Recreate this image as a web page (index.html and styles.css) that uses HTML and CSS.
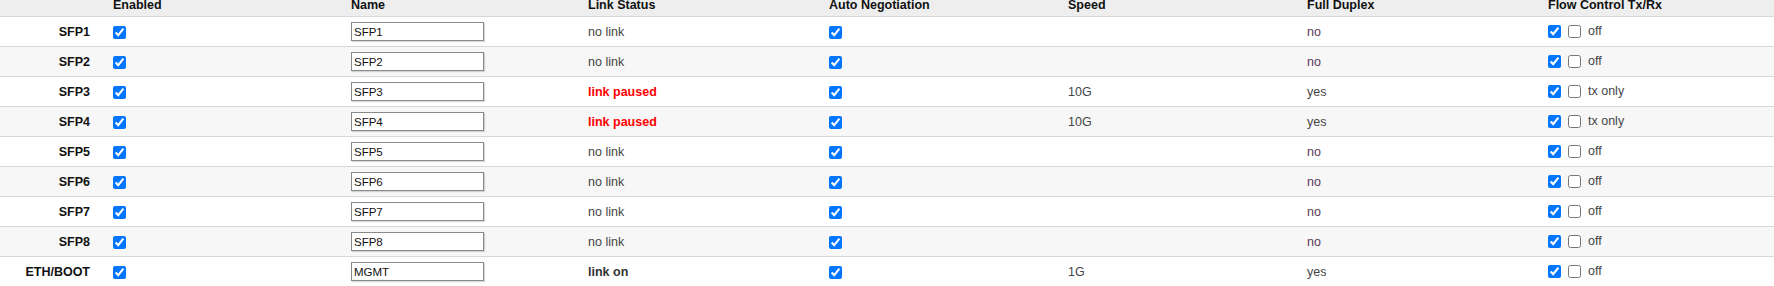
FILE: index.html
```html
<!DOCTYPE html>
<html lang="en">
<head>
    <meta charset="UTF-8">
    <meta name="viewport" content="width=device-width, initial-scale=1.0">
    <title>Ports</title>
    <link rel="stylesheet" href="styles.css">
</head>
<body>
    <table class="ports">
        <colgroup>
            <col class="c-port">
            <col class="c-enabled">
            <col class="c-name">
            <col class="c-link">
            <col class="c-auto">
            <col class="c-speed">
            <col class="c-duplex">
            <col>
        </colgroup>
        <thead>
            <tr>
                <th></th>
                <th>Enabled</th>
                <th>Name</th>
                <th>Link Status</th>
                <th>Auto Negotiation</th>
                <th>Speed</th>
                <th>Full Duplex</th>
                <th>Flow Control Tx/Rx</th>
            </tr>
        </thead>
        <tbody>
            <tr>
                <td class="port">SFP1</td>
                <td><input type="checkbox" checked></td>
                <td><input class="name" type="text" value="SFP1"></td>
                <td class="status">no link</td>
                <td><input type="checkbox" checked></td>
                <td></td>
                <td class="duplex-no">no</td>
                <td><div class="flow"><input type="checkbox" checked><input type="checkbox"><span>off</span></div></td>
            </tr>
            <tr>
                <td class="port">SFP2</td>
                <td><input type="checkbox" checked></td>
                <td><input class="name" type="text" value="SFP2"></td>
                <td class="status">no link</td>
                <td><input type="checkbox" checked></td>
                <td></td>
                <td class="duplex-no">no</td>
                <td><div class="flow"><input type="checkbox" checked><input type="checkbox"><span>off</span></div></td>
            </tr>
            <tr>
                <td class="port">SFP3</td>
                <td><input type="checkbox" checked></td>
                <td><input class="name" type="text" value="SFP3"></td>
                <td class="status paused">link paused</td>
                <td><input type="checkbox" checked></td>
                <td>10G</td>
                <td>yes</td>
                <td><div class="flow"><input type="checkbox" checked><input type="checkbox"><span>tx only</span></div></td>
            </tr>
            <tr>
                <td class="port">SFP4</td>
                <td><input type="checkbox" checked></td>
                <td><input class="name" type="text" value="SFP4"></td>
                <td class="status paused">link paused</td>
                <td><input type="checkbox" checked></td>
                <td>10G</td>
                <td>yes</td>
                <td><div class="flow"><input type="checkbox" checked><input type="checkbox"><span>tx only</span></div></td>
            </tr>
            <tr>
                <td class="port">SFP5</td>
                <td><input type="checkbox" checked></td>
                <td><input class="name" type="text" value="SFP5"></td>
                <td class="status">no link</td>
                <td><input type="checkbox" checked></td>
                <td></td>
                <td class="duplex-no">no</td>
                <td><div class="flow"><input type="checkbox" checked><input type="checkbox"><span>off</span></div></td>
            </tr>
            <tr>
                <td class="port">SFP6</td>
                <td><input type="checkbox" checked></td>
                <td><input class="name" type="text" value="SFP6"></td>
                <td class="status">no link</td>
                <td><input type="checkbox" checked></td>
                <td></td>
                <td class="duplex-no">no</td>
                <td><div class="flow"><input type="checkbox" checked><input type="checkbox"><span>off</span></div></td>
            </tr>
            <tr>
                <td class="port">SFP7</td>
                <td><input type="checkbox" checked></td>
                <td><input class="name" type="text" value="SFP7"></td>
                <td class="status">no link</td>
                <td><input type="checkbox" checked></td>
                <td></td>
                <td class="duplex-no">no</td>
                <td><div class="flow"><input type="checkbox" checked><input type="checkbox"><span>off</span></div></td>
            </tr>
            <tr>
                <td class="port">SFP8</td>
                <td><input type="checkbox" checked></td>
                <td><input class="name" type="text" value="SFP8"></td>
                <td class="status">no link</td>
                <td><input type="checkbox" checked></td>
                <td></td>
                <td class="duplex-no">no</td>
                <td><div class="flow"><input type="checkbox" checked><input type="checkbox"><span>off</span></div></td>
            </tr>
            <tr>
                <td class="port">ETH/BOOT</td>
                <td><input type="checkbox" checked></td>
                <td><input class="name" type="text" value="MGMT"></td>
                <td class="status on">link on</td>
                <td><input type="checkbox" checked></td>
                <td>1G</td>
                <td>yes</td>
                <td><div class="flow"><input type="checkbox" checked><input type="checkbox"><span>off</span></div></td>
            </tr>
        </tbody>
    </table>
</body>
</html>
```

FILE: styles.css
```css
body {
    font-family: 'Liberation Sans', Arial, sans-serif;
    font-size: 12.5px;
    color: #454545;
    background-color: #ffffff;
    margin: 0;
    padding: 0;
    overflow: hidden;
}
.ports {
    width: 100%;
    table-layout: fixed;
    border-collapse: separate;
    border-spacing: 0;
    margin-top: -2px;
}
.c-port {
    width: 113px;
}
.c-enabled {
    width: 238px;
}
.c-name {
    width: 237px;
}
.c-link {
    width: 241px;
}
.c-auto {
    width: 239px;
}
.c-speed {
    width: 239px;
}
.c-duplex {
    width: 241px;
}
.ports th {
    background-color: #eeeeee;
    color: #111;
    font-weight: bold;
    text-align: left;
    line-height: 14px;
    height: 14px;
    padding: 0 0 4px;
    vertical-align: top;
    border-bottom: 1px solid #d8d8d8;
    white-space: nowrap;
}
.ports td {
    height: 29px;
    padding: 0;
    vertical-align: middle;
    border-bottom: 1px solid #d8d8d8;
    white-space: nowrap;
}
.ports tbody tr:nth-child(even) td {
    background-color: #f7f7f7;
}
.ports td.port {
    text-align: right;
    padding-right: 23px;
    font-weight: bold;
    color: #111;
}
.ports input[type="checkbox"] {
    width: 13px;
    height: 13px;
    margin: 0;
    vertical-align: middle;
    accent-color: #0075ff;
}
.name {
    box-sizing: border-box;
    width: 133px;
    height: 19px;
    padding: 0 2px;
    border: 1px solid #8a8a8a;
    border-radius: 0;
    box-shadow: 1px 1px 1px rgba(0, 0, 0, 0.15);
    font-family: 'Liberation Sans', Arial, sans-serif;
    font-size: 11.5px;
    color: #111;
    vertical-align: middle;
}
.status.paused {
    color: #ff0000;
    font-weight: bold;
}
.status.on {
    color: #333;
    font-weight: bold;
}
.duplex-no {
    color: #5c3658;
}
.flow {
    display: flex;
    align-items: center;
    gap: 7px;
}
.flow span {
    margin-top: -2px;
}
```
